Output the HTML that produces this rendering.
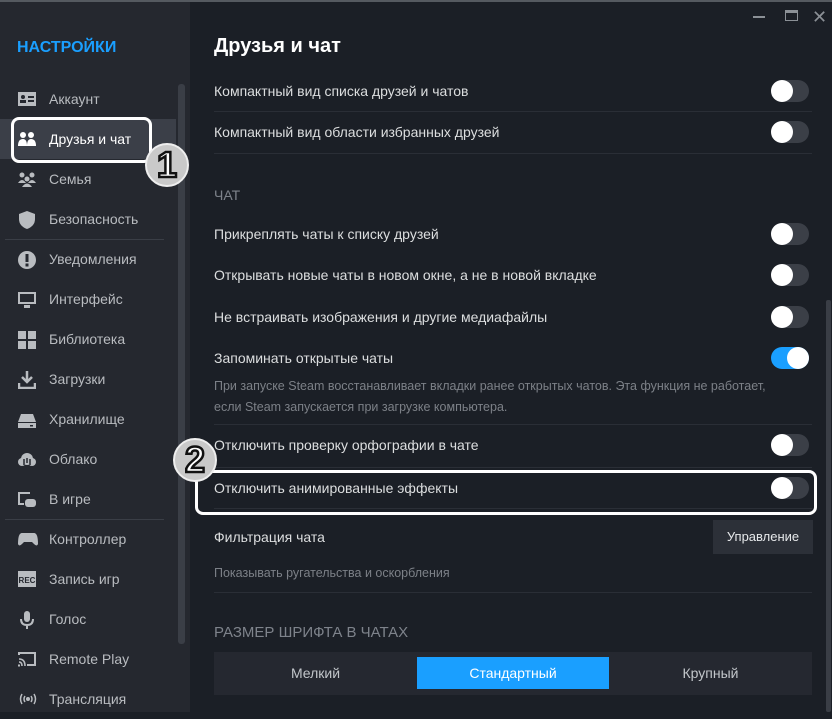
<!DOCTYPE html>
<html><head><meta charset="utf-8"><style>
*{margin:0;padding:0;box-sizing:border-box}
body{width:832px;height:712px;overflow:hidden;background:#1b1f26;font-family:"Liberation Sans",sans-serif;position:relative}
.a{position:absolute}
#side{left:0;top:0;width:190px;height:712px;background:#25282f}
.title{left:17px;top:39px;color:#1a9fff;font-weight:bold;font-size:16px}
.it{position:absolute;left:0;width:176px;height:40px;color:#b9bcc0;font-size:14px;line-height:40px;padding-left:49px}
.it svg{position:absolute;left:18px;top:12px}
.sep{position:absolute;left:5px;width:159px;height:1px;background:#3a3e46}
.t{position:absolute;left:214px;color:#dcdedf;font-size:14px;white-space:nowrap}
.d{position:absolute;left:214px;color:#7c8087;font-size:12.5px;line-height:21px}
.h{position:absolute;left:214px;color:#7e838b;font-size:14px}
.ln{position:absolute;left:214px;width:598px;height:1px;background:#2a2e36}
.tg{position:absolute;left:771px;width:38px;height:22px;border-radius:11px;background:#3b3f47}
.tg:after{content:"";position:absolute;left:0;top:0;width:22px;height:22px;border-radius:11px;background:#fff}
.tg.on{background:#1a9fff}.tg.on:after{left:16px}
.num{position:absolute;width:44px;height:44px;border-radius:22px;background:#c9c9c9;border:2px solid #eee;color:#fff;font-weight:bold;font-size:36px;text-align:center;line-height:40px;-webkit-text-stroke:2.5px #111;font-family:"Liberation Sans",sans-serif}
</style></head><body>
<div id="side" class="a">
<div class="a title">НАСТРОЙКИ</div>
<div class="a" style="left:178px;top:84px;width:7px;height:560px;background:#3a3e46;border-radius:3px"></div>
<div class="it" style="top:79px"><svg width="18" height="16"><rect x="0" y="1" width="18" height="14" fill="#b9bcc0"/><circle cx="5" cy="6" r="2" fill="#25282f"/><rect x="2" y="9" width="6" height="3" fill="#25282f"/><rect x="10" y="5" width="6" height="2" fill="#25282f"/><rect x="10" y="9" width="6" height="2" fill="#25282f"/></svg>Аккаунт</div>
<div class="it" style="top:119px;background:#3b3f48;color:#fff"><svg width="18" height="16"><circle cx="5" cy="4" r="3" fill="#fff"/><circle cx="13" cy="4" r="3" fill="#fff"/><path d="M0 15 Q0 8 5 8 Q9 8 9 15Z M9 15 Q9 8 13 8 Q18 8 18 15Z" fill="#fff"/></svg>Друзья и чат</div>
<div class="it" style="top:159px"><svg width="18" height="16"><circle cx="4" cy="4" r="2.5" fill="#b9bcc0"/><circle cx="14" cy="4" r="2.5" fill="#b9bcc0"/><circle cx="9" cy="8" r="2.5" fill="#b9bcc0"/><path d="M0 12 Q4 6 8 12Z M10 12 Q14 6 18 12Z M4 16 Q9 9 14 16Z" fill="#b9bcc0"/></svg>Семья</div>
<div class="it" style="top:199px"><svg width="18" height="18"><path d="M9 0 L17 3 V8 Q17 15 9 18 Q1 15 1 8 V3Z" fill="#b9bcc0"/></svg>Безопасность</div>
<div class="sep" style="top:239px"></div>
<div class="it" style="top:239px"><svg width="18" height="18"><circle cx="9" cy="9" r="9" fill="#b9bcc0"/><rect x="7.5" y="3" width="3" height="8" fill="#25282f"/><rect x="7.5" y="12.5" width="3" height="3" fill="#25282f"/></svg>Уведомления</div>
<div class="it" style="top:279px"><svg width="18" height="18"><rect x="0" y="1" width="18" height="12" fill="#b9bcc0"/><rect x="2" y="3" width="14" height="8" fill="#25282f"/><rect x="6" y="14" width="6" height="3" fill="#b9bcc0"/></svg>Интерфейс</div>
<div class="it" style="top:319px"><svg width="18" height="18"><rect x="0" y="0" width="8" height="8" fill="#b9bcc0"/><rect x="10" y="0" width="8" height="8" fill="#b9bcc0"/><rect x="0" y="10" width="8" height="8" fill="#b9bcc0"/><rect x="10" y="10" width="8" height="8" fill="#b9bcc0"/></svg>Библиотека</div>
<div class="it" style="top:359px"><svg width="18" height="18"><path d="M9 0 V10 M4 6 L9 11 L14 6" stroke="#b9bcc0" stroke-width="2.5" fill="none"/><path d="M1 12 V17 H17 V12" stroke="#b9bcc0" stroke-width="2.5" fill="none"/></svg>Загрузки</div>
<div class="it" style="top:399px"><svg width="18" height="18"><path d="M3 3 H15 L18 11 H0Z" fill="#b9bcc0"/><rect x="0" y="12" width="18" height="5" fill="#b9bcc0"/><rect x="12" y="14" width="3" height="1.5" fill="#25282f"/></svg>Хранилище</div>
<div class="it" style="top:439px"><svg width="18" height="18"><circle cx="9" cy="8" r="6" fill="#b9bcc0"/><circle cx="4" cy="11" r="4" fill="#b9bcc0"/><circle cx="14" cy="11" r="4" fill="#b9bcc0"/><path d="M6 8 V14 M9 12 V7 M12 8 V14" stroke="#25282f" stroke-width="1.5"/></svg>Облако</div>
<div class="it" style="top:479px"><svg width="18" height="18"><path d="M12 2 H1 V13 H6" stroke="#b9bcc0" stroke-width="2" fill="none"/><rect x="7" y="8" width="11" height="8" rx="3" fill="#b9bcc0"/></svg>В игре</div>
<div class="sep" style="top:519px"></div>
<div class="it" style="top:519px"><svg width="20" height="16"><path d="M4 2 H16 Q20 2 20 13 Q19 16 16 13 L14 11 H6 L4 13 Q1 16 0 13 Q0 2 4 2Z" fill="#b9bcc0"/></svg>Контроллер</div>
<div class="it" style="top:559px"><svg width="18" height="16"><rect x="0" y="0" width="18" height="16" fill="#b9bcc0"/><text x="9" y="12" font-size="8" font-weight="bold" text-anchor="middle" fill="#25282f" font-family="Liberation Sans">REC</text></svg>Запись игр</div>
<div class="it" style="top:599px"><svg width="18" height="18"><rect x="6" y="0" width="6" height="11" rx="3" fill="#b9bcc0"/><path d="M3 8 Q3 14 9 14 Q15 14 15 8 M9 14 V18" stroke="#b9bcc0" stroke-width="2" fill="none"/></svg>Голос</div>
<div class="it" style="top:639px"><svg width="18" height="16"><path d="M1 4 V2 H17 V14 H9" stroke="#b9bcc0" stroke-width="2" fill="none"/><path d="M1 8 Q7 8 7 15 M1 11 Q4 11 4 15" stroke="#b9bcc0" stroke-width="1.6" fill="none"/><rect x="0" y="13.5" width="2" height="2" fill="#b9bcc0"/></svg>Remote Play</div>
<div class="it" style="top:679px"><svg width="20" height="16"><circle cx="10" cy="8" r="2" fill="#b9bcc0"/><path d="M4 3 Q1 8 4 13 M16 3 Q19 8 16 13 M7 5 Q5 8 7 11 M13 5 Q15 8 13 11" stroke="#b9bcc0" stroke-width="1.5" fill="none"/></svg>Трансляция</div>
</div>
<div class="a" style="left:0;top:0;width:832px;height:2px;background:#555a60"></div>
<div class="a" style="left:753px;top:16px;width:12px;height:1.5px;background:#8b9096"></div>
<div class="a" style="left:785px;top:10px;width:13px;height:11px;border:1.5px solid #8b9096;border-top-width:3px"></div>
<div class="a" style="left:812px;top:7px;color:#8b9096;font-size:18px">✕</div>
<div class="a" style="left:826px;top:300px;width:5px;height:412px;background:#3a3e46;border-radius:2px"></div>

<div class="a" style="left:214px;top:35px;color:#fff;font-size:20px;font-weight:bold">Друзья и чат</div>
<div class="t" style="top:83px">Компактный вид списка друзей и чатов</div><div class="tg" style="top:80px"></div>
<div class="ln" style="top:111px"></div>
<div class="t" style="top:124px">Компактный вид области избранных друзей</div><div class="tg" style="top:121px"></div>
<div class="ln" style="top:153px"></div>
<div class="h" style="top:187px">ЧАТ</div>
<div class="t" style="top:226px">Прикреплять чаты к списку друзей</div><div class="tg" style="top:223px"></div>
<div class="t" style="top:267px">Открывать новые чаты в новом окне, а не в новой вкладке</div><div class="tg" style="top:264px"></div>
<div class="t" style="top:309px">Не встраивать изображения и другие медиафайлы</div><div class="tg" style="top:306px"></div>
<div class="t" style="top:350px">Запоминать открытые чаты</div><div class="tg on" style="top:347px"></div>
<div class="d" style="top:376px">При запуске Steam восстанавливает вкладки ранее открытых чатов. Эта функция не работает,<br>если Steam запускается при загрузке компьютера.</div>
<div class="ln" style="top:424px"></div>
<div class="t" style="top:437px">Отключить проверку орфографии в чате</div><div class="tg" style="top:434px"></div>
<div class="ln" style="top:467px"></div>
<div class="t" style="top:480px">Отключить анимированные эффекты</div><div class="tg" style="top:477px"></div>
<div class="ln" style="top:508px"></div>
<div class="t" style="top:529px">Фильтрация чата</div>
<div class="a" style="left:713px;top:520px;width:100px;height:34px;background:#2c3038;color:#e6e8ea;font-size:13px;text-align:center;line-height:34px">Управление</div>
<div class="d" style="top:563px">Показывать ругательства и оскорбления</div>
<div class="ln" style="top:592px"></div>
<div class="h" style="top:624px;font-size:15px">РАЗМЕР ШРИФТА В ЧАТАХ</div>
<div class="a" style="left:214px;top:652px;width:598px;height:43px;background:#252830"></div>
<div class="a" style="left:214px;top:652px;width:203px;height:43px;color:#c2c6ca;font-size:14px;text-align:center;line-height:43px">Мелкий</div>
<div class="a" style="left:417px;top:657px;width:192px;height:32px;background:#1a9fff;color:#fff;font-size:14px;text-align:center;line-height:32px">Стандартный</div>
<div class="a" style="left:609px;top:652px;width:203px;height:43px;color:#c2c6ca;font-size:14px;text-align:center;line-height:43px">Крупный</div>

<div class="a" style="left:11px;top:117px;width:141px;height:46px;border:3px solid #fff;border-radius:8px"></div>
<div class="num" style="left:145px;top:143px">1</div>
<div class="a" style="left:195px;top:470px;width:622px;height:45px;border:3px solid #fff;border-radius:8px"></div>
<div class="num" style="left:173px;top:438px">2</div>
</body></html>
